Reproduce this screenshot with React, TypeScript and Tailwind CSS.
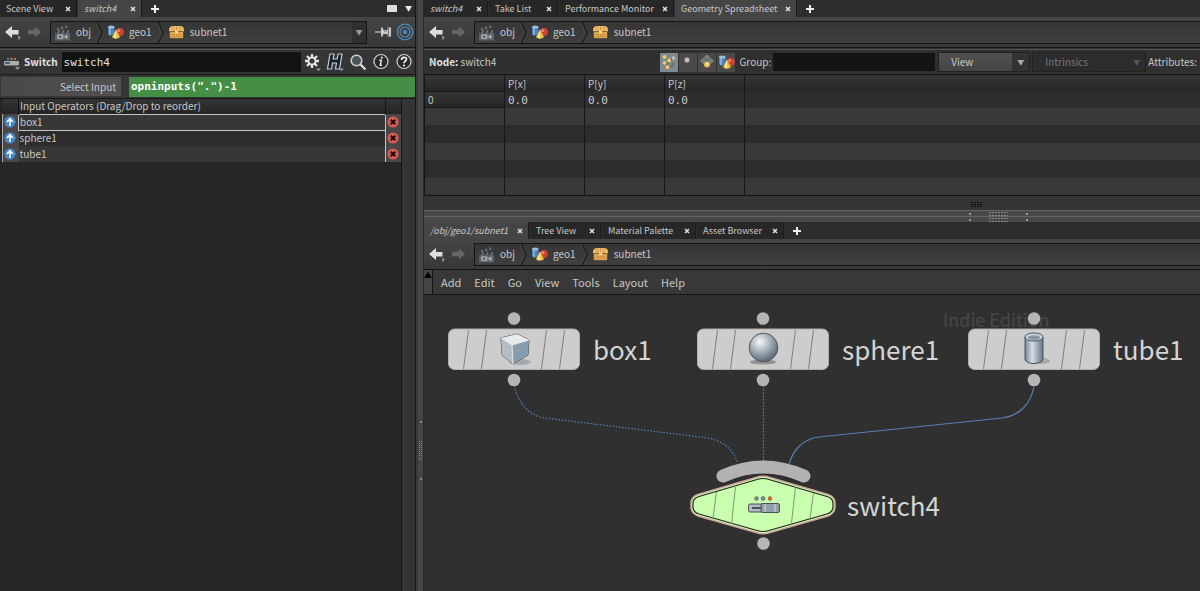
import type { ReactNode } from "react"

type Tab = { label: string; width: string; active?: boolean; italic?: boolean }

const leftTabs: Tab[] = [
  { label: "Scene View", width: "w-[77px]" },
  { label: "switch4", width: "w-[64px]", active: true, italic: true },
]

const sheetTabs: Tab[] = [
  { label: "switch4", width: "w-[64px]", italic: true },
  { label: "Take List", width: "w-[69px]" },
  { label: "Performance Monitor", width: "w-[115px]" },
  { label: "Geometry Spreadsheet", width: "w-[122px]", active: true },
]

const networkTabs: Tab[] = [
  { label: "/obj/geo1/subnet1", width: "w-[105px]", active: true, italic: true },
  { label: "Tree View", width: "w-[71px]" },
  { label: "Material Palette", width: "w-[94px]" },
  { label: "Asset Browser", width: "w-[87px]" },
]

const operators = ["box1", "sphere1", "tube1"]
const menus = ["Add", "Edit", "Go", "View", "Tools", "Layout", "Help"]

function TabBar({ tabs, children }: { tabs: Tab[]; children?: ReactNode }) {
  return (
    <div className="flex h-[17px] shrink-0 items-stretch gap-px bg-[#2d2d2d]">
      {tabs.map((tab) => (
        <div
          key={tab.label}
          className={`flex shrink-0 items-center justify-between border-r border-[#1c1c1c] pr-1 pl-[6px] text-[9px] leading-4 whitespace-nowrap ${tab.width} ${
            tab.active ? "bg-[#454545]" : "bg-[#272727]"
          }`}
        >
          <button type="button" className={tab.italic ? "italic" : ""}>
            {tab.label}
          </button>
          <button type="button" aria-label={`Close ${tab.label}`}>
            <svg viewBox="0 0 8 8" className="h-2 w-2" stroke="#e2e2e2" strokeWidth="1.5">
              <path d="M2 2l4 4M6 2l-4 4" />
            </svg>
          </button>
        </div>
      ))}
      <button type="button" aria-label="New tab" className="flex w-6 items-center justify-center">
        <svg viewBox="0 0 10 10" className="h-[10px] w-[10px]" stroke="#eee" strokeWidth="2">
          <path d="M5 1v8M1 5h8" />
        </svg>
      </button>
      {children}
    </div>
  )
}

function ClapperIcon() {
  return (
    <svg viewBox="0 0 17 17" className="h-[17px] w-[17px]">
      <path d="M1 4.500L14 .5l1.500 3L2 8z" fill="#3a3d3f" />
      <path d="M3.500 4l1.500 2.500M7.500 2.800l1.500 2.500M11.500 1.500l1.500 2.500" stroke="#85898b" strokeWidth="1.200" />
      <rect x="1" y="6.500" width="15" height="10" fill="#5a6064" />
      <path d="M1 6.500h15v2.300H1z" fill="#36393b" />
      <path d="M4 8.800l1.500-2.300M8.500 8.800L10 6.500M13 8.800l1.500-2.300" stroke="#85898b" strokeWidth="1.200" />
      <rect x="3" y="10.300" width="6.500" height="5" rx="1" fill="#9da2a5" />
      <path d="M9.500 12.800L13.500 10.300v5z" fill="#a9aeb1" />
      <circle cx="6" cy="12.800" r="1.200" fill="#5a6064" />
    </svg>
  )
}

function GeoIcon() {
  return (
    <svg viewBox="0 0 17 16" className="h-4 w-[17px]">
      <path d="M1 3v7c0 1.500 6 2 6.500.5V3z" fill="#4a82bd" />
      <path d="M3 3v8.300" stroke="#9fc2e4" strokeWidth="1.300" />
      <ellipse cx="4.200" cy="3" rx="3.300" ry="1.600" fill="#9dbcdb" />
      <circle cx="12.800" cy="8" r="4" fill="#cf4238" />
      <circle cx="11.700" cy="6.600" r="1.500" fill="#ee877b" />
      <path d="M9 5.500L5 13c1 2.300 6.500 2.300 8 0z" fill="#e6bd43" />
      <path d="M9 5.500L6.500 13c.8 1 2 1.300 2.800 1.300z" fill="#fbe78c" />
    </svg>
  )
}

function SubnetIcon() {
  return (
    <svg viewBox="0 0 17 14" className="h-[14px] w-[17px]">
      <path d="M1 5C1 2.500 2.500 1 5 1h7c2.500 0 4 1.500 4 4v1.500H1z" fill="#ecb968" />
      <path d="M1.800 6.500h13.400V12c0 .8-.4 1.200-1.200 1.200H3c-.8 0-1.200-.4-1.200-1.200z" fill="#e0a551" />
      <path d="M1 6.500h15" stroke="#9a6422" strokeWidth="1.100" />
      <path d="M5 1.500v4M8.500 1.200v4M12 1.500v4" stroke="#d2964a" strokeWidth=".9" />
      <path d="M3 9.700h11M3 11.700h11" stroke="#c68b3c" strokeWidth=".8" />
      <rect x="7" y="5.800" width="3" height="2.400" rx=".5" fill="#f7dc9d" />
    </svg>
  )
}

function Chevron() {
  return (
    <svg viewBox="0 0 7 21" className="h-full w-[7px]" fill="none" preserveAspectRatio="none">
      <path d="M1 0l5 10.500L1 21" stroke="#161616" strokeWidth="1.300" />
      <path d="M0 0l5 10.500L0 21" stroke="#565656" strokeWidth=".6" />
    </svg>
  )
}

function PathBar({ full = false }: { full?: boolean }) {
  return (
    <div className="flex h-[31px] shrink-0 items-center border-b border-[#141414] bg-[#3b3b3b] bg-linear-to-b from-[#454545] to-[#383838] pl-1">
      <button type="button" aria-label="Back" className="w-6">
        <svg viewBox="0 0 18 17" className="h-[17px] w-[18px]">
          <path d="M1 8l7-6v4h6.500v4.500H8V14z" fill="#dedede" />
          <path d="M14.500 11.500v4.500l2-2.200z" fill="#b5b5b5" />
        </svg>
      </button>
      <button type="button" aria-label="Forward" className="w-[22px]">
        <svg viewBox="0 0 14 14" className="h-[14px] w-[14px]">
          <path d="M13 7L7 1.500v3.300H0v4.400h7v3.300z" fill="#666" />
        </svg>
      </button>
      <div
        className={`flex h-[23px] min-w-0 flex-1 items-center border border-[#151515] bg-linear-to-b from-[#353535] to-[#404040] text-[10px] leading-5 ${
          full ? "border-r-0" : ""
        }`}
      >
        <a href="#obj" className="flex items-center gap-[5px] pr-[5px] pl-[3px]">
          <ClapperIcon />
          obj
        </a>
        <Chevron />
        <a href="#geo1" className="flex items-center gap-[5px] pr-[5px] pl-1">
          <GeoIcon />
          geo1
        </a>
        <Chevron />
        <a href="#subnet1" className="flex flex-1 items-center gap-[5px] pl-1">
          <SubnetIcon />
          subnet1
        </a>
        {!full && (
          <button
            type="button"
            aria-label="Path history"
            className="flex h-full w-[14px] items-center justify-center bg-[#303030] text-[7px] text-[#999]"
          >
            ▼
          </button>
        )}
      </div>
      {!full && (
        <div className="flex items-center gap-1 pr-px pl-2">
          <button type="button" aria-label="Pin">
            <svg viewBox="0 0 17 14" className="h-[14px] w-[17px]">
              <path d="M0 7h7" stroke="#ccc" strokeWidth="1.200" />
              <path d="M6 2.500h1.500l1 2.500h4V2.500H16v9h-3.500V9h-4l-1 2.500H6z" fill="#c9c9c9" />
              <path d="M13.500 3v8M9 6h3" stroke="#666" strokeWidth=".9" />
            </svg>
          </button>
          <button type="button" aria-label="Follow selection">
            <svg viewBox="0 0 18 18" className="h-[18px] w-[18px]" fill="none">
              <circle cx="9" cy="9" r="7.800" stroke="#5089ba" strokeWidth="1.200" />
              <circle cx="9" cy="9" r="5" stroke="#5c8ab2" strokeWidth="1.200" />
              <circle cx="9" cy="9" r="2.300" fill="#4584bd" />
            </svg>
          </button>
        </div>
      )}
    </div>
  )
}

function ToolIcons() {
  return (
    <div className="flex items-center gap-[5px] pr-[2px] pl-[2px]">
      <button type="button" aria-label="Gear menu">
        <svg viewBox="0 0 18 18" className="h-[18px] w-[18px]">
          <g stroke="#e3e3e3" strokeWidth="2.300">
            <path d="M9 1v4M9 11v4M2 8h4M12 8h4M4 3l3 3M11 10l3 3M14 3l-3 3M7 10l-3 3" />
          </g>
          <circle cx="9" cy="8" r="3.600" fill="none" stroke="#e3e3e3" strokeWidth="2" />
          <path d="M13 15.500h5l-2.500 2.500z" fill="#999" />
        </svg>
      </button>
      <button type="button" aria-label="Houdini presets">
        <svg viewBox="0 0 18 18" className="h-[18px] w-[18px]">
          <path
            d="M4 1h4l-.8 5h4L12 1h4l-2.500 15h-4l1-6h-4l-1 6h-4z"
            fill="#16202b"
            stroke="#c4d0d9"
            strokeWidth="1.200"
          />
          <path d="M13 15.500h5l-2.500 2.500z" fill="#999" />
        </svg>
      </button>
      <button type="button" aria-label="Search parameters">
        <svg viewBox="0 0 18 18" className="h-[18px] w-[18px]">
          <circle cx="7.500" cy="7.500" r="5.300" fill="#4b5459" stroke="#d3d3d3" strokeWidth="1.500" />
          <path d="M11.500 11.500l5 5" stroke="#ddd" strokeWidth="2.300" />
        </svg>
      </button>
      <button type="button" aria-label="Information">
        <svg viewBox="0 0 18 18" className="h-[18px] w-[18px]">
          <circle cx="9" cy="8.500" r="7" fill="#292929" stroke="#d6d6d6" strokeWidth="1.200" />
          <path d="M7.300 7.300h2l-1 5h1.700" fill="none" stroke="#d5dde3" strokeWidth="1.600" />
          <circle cx="9.800" cy="4.700" r="1.100" fill="#d5dde3" />
        </svg>
      </button>
      <button type="button" aria-label="Help">
        <svg viewBox="0 0 18 18" className="h-[18px] w-[18px]">
          <circle cx="9" cy="8.500" r="7" fill="#292929" stroke="#d6d6d6" strokeWidth="1.200" />
          <path
            d="M6.500 7c0-3.500 5-3.300 5-.8C11.500 8 9 8 9 10.200"
            fill="none"
            stroke="#eee"
            strokeWidth="1.700"
          />
          <circle cx="9" cy="12.500" r="1.100" fill="#eee" />
        </svg>
      </button>
    </div>
  )
}

function ParameterPane() {
  return (
    <section className="flex min-w-0 flex-col border-r border-[#161616] bg-[#353535]">
      <TabBar tabs={leftTabs}>
        <div className="ml-auto flex items-center gap-2 pr-[3px]">
          <button type="button" aria-label="Maximize pane" className="h-[7px] w-[10px] bg-[#ddd]" />
          <button type="button" aria-label="Pane menu" className="text-[7px] text-[#eee]">
            ▼
          </button>
        </div>
      </TabBar>
      <PathBar />
      <div className="mt-px flex h-[26px] shrink-0 items-center border-t border-b border-t-[#555] border-b-[#1a1a1a]">
        <button type="button" aria-label="Switch node menu" className="ml-[3px]">
          <svg viewBox="0 0 17 16" className="h-4 w-[17px]">
            <rect x="1" y="7" width="15" height="4.500" rx="1" fill="#a8adb0" />
            <rect x="2" y="8" width="5" height="2" fill="#555b60" />
            <circle cx="5" cy="5" r="1.200" fill="#777" />
            <circle cx="8.500" cy="5" r="1.200" fill="#888" />
            <circle cx="12" cy="5" r="1.200" fill="#c06a3a" />
            <path d="M12 13h5l-2.500 3z" fill="#999" />
          </svg>
        </button>
        <label htmlFor="node-name" className="pl-1 text-[10px] leading-5 font-bold text-[#e0e0e0]">
          Switch
        </label>
        <input
          id="node-name"
          defaultValue="switch4"
          className="ml-1 h-5 min-w-0 flex-1 bg-[#131313] px-[2px] font-['DejaVu_Sans_Mono',monospace] text-[11px] text-[#e0e0e0] outline-none"
        />
        <ToolIcons />
      </div>
      <div className="flex h-6 shrink-0 items-center gap-2 border-b border-[#161616] pl-px">
        <label
          htmlFor="select-input"
          className="h-[19px] w-[120px] bg-linear-to-r from-[#494949] to-[#515151] pr-[5px] text-right text-[10px] leading-[19px]"
        >
          Select Input
        </label>
        <input
          id="select-input"
          defaultValue={'opninputs(".")-1'}
          className="h-5 min-w-0 flex-1 bg-[#448f45] px-[2px] font-['DejaVu_Sans_Mono',monospace] text-[11px] font-bold text-white outline-none"
        />
      </div>
      <div className="flex flex-1">
        <div className="min-w-0 flex-1 border-r border-[#171717] bg-[#262626] pl-[2px]">
          <table className="w-full table-fixed border-collapse text-[10px] leading-[14px]">
            <colgroup>
              <col className="w-4" />
              <col />
              <col className="w-4" />
            </colgroup>
            <thead>
              <tr className="h-[15px] bg-linear-to-b from-[#333] to-[#252525]">
                <th className="border-r border-[#151515] p-0" />
                <th className="border-r border-[#151515] p-0 pl-px text-left font-normal">
                  Input Operators (Drag/Drop to reorder)
                </th>
                <th className="p-0" />
              </tr>
            </thead>
            <tbody>
              {operators.map((name, i) => (
                <tr key={name} className="h-4 odd:bg-[#373737] even:bg-[#2c2c2c]">
                  <td className="border-l border-[#aaa] bg-[#484848] p-0">
                    <button type="button" aria-label={`Jump to ${name}`} className="block">
                      <svg viewBox="0 0 14 14" className="h-[14px] w-[14px]">
                        <circle cx="7" cy="7" r="5.700" fill="#4685c5" />
                        <path d="M7 11V4M4 7l3-3.300L10 7" fill="none" stroke="#fff" strokeWidth="1.500" />
                      </svg>
                    </button>
                  </td>
                  <td className={`p-0 pl-px ${i === 0 ? "border border-[#c4c4c4]" : ""}`}>{name}</td>
                  <td className="border-l border-[#c4c4c4] bg-[#484848] p-0">
                    <button type="button" aria-label={`Remove ${name}`} className="block">
                      <svg viewBox="0 0 14 14" className="h-[14px] w-[14px]">
                        <circle cx="7" cy="7" r="5.500" fill="#e05a50" />
                        <path d="M4.800 4.800l4.400 4.400M9.200 4.800L4.800 9.200" stroke="#16090a" strokeWidth="2" />
                      </svg>
                    </button>
                  </td>
                </tr>
              ))}
            </tbody>
          </table>
        </div>
        <div className="w-[13px] bg-[#343434]" />
      </div>
    </section>
  )
}

function DropDown({ id, label, disabled = false }: { id: string; label: string; disabled?: boolean }) {
  return (
    <div
      className={`relative flex h-5 border border-[#222] ${
        disabled ? "w-[114px] bg-[#2c2c2c] text-[#777]" : "w-[92px] bg-linear-to-b from-[#505050] to-[#444]"
      }`}
    >
      <select
        id={id}
        aria-label={label}
        disabled={disabled}
        className="w-full appearance-none bg-transparent pl-3 text-[10px] leading-[18px] outline-none"
      >
        <option>{label}</option>
      </select>
      <span
        className={`pointer-events-none absolute inset-y-0 right-0 flex w-[17px] items-center justify-center text-[7px] ${
          disabled ? "text-[#555]" : "bg-[#333] text-[#aaa]"
        }`}
      >
        ▼
      </span>
    </div>
  )
}

function ComponentButtons() {
  const base = "flex h-[19px] w-[18px] items-center justify-center"
  return (
    <div className="flex gap-px">
      <button type="button" aria-label="Points" className={`${base} bg-[#7d8a93]`}>
        <svg viewBox="0 0 16 16" className="h-4 w-4">
          <path d="M3 3l5 4-3 6M8 7l5-3M5 13l7-1" stroke="#4e5254" fill="none" />
          <g fill="#f5ca5a">
            <circle cx="3.500" cy="3" r="2" />
            <circle cx="8" cy="6.500" r="2" />
            <circle cx="3.500" cy="9" r="1.800" />
            <circle cx="6.500" cy="13" r="2" />
          </g>
          <circle cx="12.500" cy="4" r="1.700" fill="#c9c5ad" />
          <circle cx="12" cy="10" r="1.700" fill="#6b7378" />
        </svg>
      </button>
      <button type="button" aria-label="Vertices" className={`${base} bg-[#4a4a4a]`}>
        <svg viewBox="0 0 16 16" className="h-4 w-4">
          <circle cx="7" cy="6" r="3.200" fill="#6f6868" />
          <circle cx="7" cy="6" r="2.200" fill="#d9bcbc" />
        </svg>
      </button>
      <button type="button" aria-label="Primitives" className={`${base} bg-[#4a4a4a]`}>
        <svg viewBox="0 0 16 16" className="h-4 w-4">
          <path d="M8 1l6.500 6L8 13 1.500 7z" fill="#777b7d" stroke="#9a9a9a" strokeWidth=".6" />
          <path d="M5 4l6.500 6M11 4L4.500 10" stroke="#55595b" strokeWidth=".7" />
          <circle cx="8" cy="10.500" r="3" fill="#e9b945" />
          <circle cx="8" cy="10" r="1.400" fill="#fbeeb0" />
        </svg>
      </button>
      <button type="button" aria-label="Detail" className={`${base} bg-[#4a4a4a]`}>
        <GeoIcon />
      </button>
    </div>
  )
}

function Spreadsheet() {
  const cell = "border-r border-[#171717] p-0 pl-[3px]"
  return (
    <section className="flex shrink-0 flex-col">
      <TabBar tabs={sheetTabs} />
      <PathBar full />
      <div className="mt-px flex h-[26px] shrink-0 items-center border-t border-b border-t-[#555] border-b-[#141414] bg-[#303030] pl-[5px] text-[10px] leading-5">
        <div className="flex-1 whitespace-nowrap">
          <b className="text-[#e0e0e0]">Node:</b> switch4
        </div>
        <ComponentButtons />
        <label htmlFor="group" className="pl-1">
          Group:
        </label>
        <input id="group" className="mr-[3px] ml-[2px] h-[18px] w-[162px] bg-[#141414] outline-none" />
        <DropDown id="view" label="View" />
        <div className="w-[2px]" />
        <DropDown id="intrinsics" label="Intrinsics" disabled />
        <span className="pr-[3px] pl-[2px]">Attributes:</span>
      </div>
      <div className="border-b border-l border-[#141414] pt-px">
        <table className="w-full table-fixed border-separate border-spacing-0 text-[10px] leading-[14px]">
          <colgroup>
            <col className="w-20" />
            <col className="w-20" />
            <col className="w-20" />
            <col className="w-20" />
            <col />
          </colgroup>
          <thead>
            <tr className="h-[15px] bg-linear-to-b from-[#363636] to-[#262626] text-left">
              <th className={cell} />
              {["P[x]", "P[y]", "P[z]"].map((name) => (
                <th key={name} className={`${cell} font-normal`}>
                  {name}
                </th>
              ))}
              <th className="p-0" />
            </tr>
          </thead>
          <tbody>
            <tr className="h-[17px] bg-[#2d2d2d]">
              <td className={`${cell} border-y bg-linear-to-b from-[#363636] to-[#262626]`}>0</td>
              {["x", "y", "z"].map((axis) => (
                <td key={axis} className={`${cell} pt-[2px] align-middle font-['DejaVu_Sans_Mono',monospace] text-[11px]`}>
                  0.0
                </td>
              ))}
              <td className="p-0" />
            </tr>
            {[1, 2, 3, 4, 5].map((row) => (
              <tr key={row} className="h-[17px] odd:h-[18px] odd:bg-[#2c2c2c] even:bg-[#393939]">
                <td className={cell} />
                <td className={cell} />
                <td className={cell} />
                <td className={cell} />
                <td className="p-0" />
              </tr>
            ))}
          </tbody>
        </table>
      </div>
      <div className="flex h-[14px] items-center bg-[#353535] pt-[2px] pl-[70%]">
        <div className="ml-1 grid grid-cols-4 gap-px">
          {Array.from({ length: 12 }, (_, i) => (
            <i key={i} className="h-px w-[2px] bg-[#0d0d0d] pt-px" />
          ))}
        </div>
      </div>
    </section>
  )
}

function SplitterRow() {
  return (
    <div className="flex h-[6px] items-center gap-[18px] border-t border-[#666] bg-[#484848] pl-[70%]">
      <i className="ml-[2px] h-[2px] w-[2px] bg-[#999]" />
      <svg viewBox="0 0 19 4" className="h-1 w-[19px]" stroke="#8a8a8a" strokeWidth="1" strokeDasharray="2 1">
        <path d="M0 .5h19M0 3.500h19" />
      </svg>
      <i className="h-[2px] w-[2px] bg-[#999]" />
    </div>
  )
}

function BoxShape() {
  return (
    <g>
      <ellipse cx="72" cy="50" rx="11" ry="3" fill="#999" opacity=".7" />
      <path d="M53 26l16-4 12 6-1 15-15 9-11-9z" fill="#8fa3b3" stroke="#4b4b4b" strokeLinejoin="round" />
      <path d="M53 26l16-4 12 6-17 5z" fill="#e9ebec" />
      <path d="M53 26l11 7 1 19-11-9z" fill="#b2bdc6" />
      <path d="M64 33l17-5-1 15-15 9z" fill="#879dad" />
      <path d="M53 26l11 7 17-5M64 33l1 19" stroke="#f1f1f1" fill="none" strokeWidth=".9" />
    </g>
  )
}

function SphereShape() {
  return (
    <g>
      <defs>
        <radialGradient id="ball" cx=".38" cy=".3" r=".7">
          <stop offset="0" stopColor="#f7f7f7" />
          <stop offset=".45" stopColor="#aeb8c0" />
          <stop offset="1" stopColor="#5b6a77" />
        </radialGradient>
      </defs>
      <ellipse cx="66" cy="50" rx="13" ry="2.500" fill="#777" opacity=".7" />
      <circle cx="66.500" cy="35.500" r="14.300" fill="url(#ball)" stroke="#4b5761" />
    </g>
  )
}

function TubeShape() {
  return (
    <g>
      <defs>
        <linearGradient id="barrel">
          <stop offset="0" stopColor="#738697" />
          <stop offset=".4" stopColor="#d7dde1" />
          <stop offset="1" stopColor="#647584" />
        </linearGradient>
      </defs>
      <ellipse cx="74" cy="49" rx="8" ry="3" fill="#999" opacity=".7" />
      <path d="M57 25v22c0 6 18 6 18 0V25z" fill="url(#barrel)" stroke="#48545e" />
      <ellipse cx="66" cy="25" rx="9" ry="4" fill="#cfd6db" stroke="#48545e" />
      <ellipse cx="66" cy="25.500" rx="6" ry="2.300" fill="#8397a6" />
    </g>
  )
}

function GraphNode({ name, place, children }: { name: string; place: string; children: ReactNode }) {
  return (
    <div className={`absolute flex items-center gap-[13px] ${place}`}>
      <svg viewBox="0 0 132 74" className="h-[74px] w-[132px]">
        <circle cx="66" cy="6.500" r="6.300" fill="#b5b5b5" />
        <circle cx="66" cy="68" r="6.300" fill="#b5b5b5" />
        <rect x=".5" y="17" width="131" height="40.500" rx="6" fill="#cdcdcd" stroke="#b4aead" />
        <path
          d="M20.500 18l-5 39M38.500 18l-5 39M98.500 18l-5 39M116.500 18l-5 39"
          stroke="#808080"
          strokeWidth="1"
        />
        {children}
      </svg>
      <span className="text-[26px] leading-8 text-[#d4d4d4]">{name}</span>
    </div>
  )
}

function SwitchNode() {
  return (
    <div className="absolute top-[164px] left-[266px] flex items-center gap-[11px]">
      <svg viewBox="0 0 146 92" className="h-[92px] w-[146px]">
        <path d="M33 17Q73 -1 114 17" fill="none" stroke="#b3b1b1" strokeWidth="13" strokeLinecap="round" />
        <path
          d="M66 18.500Q73 16 80 18.500L138 35.500Q145 38 145 44V48Q145 54 138 57L80 73.500Q73 76 66 73.500L8 57Q1 54 1 48V44Q1 38 8 35.500z"
          fill="#c9ffae"
          stroke="#d1a79c"
          strokeWidth="1.500"
        />
        <path
          d="M67 20.500Q73 18.500 79 20.500L137 37.500Q143 39.500 143 44V48Q143 53 137 55L79 71.500Q73 73.500 67 71.500L9 55Q3 53 3 48V44Q3 39.500 9 37.500z"
          fill="none"
          stroke="#20231f"
          strokeWidth="1.200"
        />
        <path
          d="M26.500 33L23 59M45.500 28L41.500 65M105.500 28L101.500 64M123.500 34L120 59"
          stroke="#7f9a72"
          strokeWidth="1"
        />
        <g stroke="#49525a">
          <circle cx="66.500" cy="39.500" r="1.700" fill="#9aa4ad" />
          <circle cx="73" cy="39.500" r="1.700" fill="#9aa4ad" />
          <circle cx="80" cy="39.500" r="1.700" fill="#e87732" stroke="#a84d1c" />
          <rect x="58.500" y="45" width="30" height="8" rx="1.500" fill="#b1bac1" />
          <path d="M62 49h9" strokeWidth="2" />
          <rect x="71" y="44.500" width="18.500" height="9" rx="1.500" fill="#92a0ab" />
          <path d="M75 45v8M85 45v8" stroke="#d3dbe0" />
        </g>
        <circle cx="73.500" cy="84.500" r="6.300" fill="#b5b5b5" />
      </svg>
      <span className="text-[26px] leading-8 text-[#d4d4d4]">switch4</span>
    </div>
  )
}

function Network() {
  return (
    <section className="flex flex-1 flex-col">
      <TabBar tabs={networkTabs} />
      <PathBar full />
      <div className="flex h-[25px] shrink-0 items-stretch border-b border-[#171717] bg-[#383838]">
        <button
          type="button"
          aria-label="Collapse menu"
          className="flex w-[9px] justify-center border-r border-[#161616] bg-[#444] text-[8px] leading-[10px] text-black"
        >
          ▲
        </button>
        <nav className="flex items-center gap-[13px] pl-2 text-[11px] leading-5">
          {menus.map((menu) => (
            <button key={menu} type="button">
              {menu}
            </button>
          ))}
        </nav>
      </div>
      <div className="relative min-h-[290px] flex-1 overflow-hidden bg-[#303030]">
        <span className="absolute top-[12px] left-[519px] text-lg leading-6 whitespace-nowrap text-[#484848]">
          Indie Edition
        </span>
        <svg className="absolute inset-0 h-full w-full" fill="none" stroke="#5681b8" strokeWidth="1.200">
          <path d="M90.500 91C94 109 106 121 121 123L284 143C300 146 309 155 314 168" strokeDasharray="1.500 1.700" />
          <path d="M339.500 91V166" strokeDasharray="1.500 1.700" />
          <path d="M610 91C607 109 595 121 578 123L395 142C379 144 369 155 365 169" />
        </svg>
        <GraphNode name="box1" place="top-[17px] left-[24px]">
          <BoxShape />
        </GraphNode>
        <GraphNode name="sphere1" place="top-[17px] left-[273px]">
          <SphereShape />
        </GraphNode>
        <GraphNode name="tube1" place="top-[17px] left-[544px]">
          <TubeShape />
        </GraphNode>
        <SwitchNode />
      </div>
    </section>
  )
}

export default function App() {
  return (
    <main className="grid min-h-screen grid-cols-[minmax(0,416fr)_8px_minmax(0,776fr)] overflow-hidden bg-[#303030] font-['Noto_Sans_CJK_SC',sans-serif] text-[#c8c8c8]">
      <ParameterPane />
      <div className="flex flex-col items-center justify-center gap-[18px] border-r border-l-2 border-r-[#2a2a2a] border-l-[#3a3a3a] bg-[#454545] pt-[310px]">
        <i className="h-[2px] w-[2px] bg-[#888]" />
        <i className="h-[19px] w-[3px] border-x border-dotted border-[#888]" />
        <i className="h-[2px] w-[2px] bg-[#888]" />
      </div>
      <div className="flex min-w-0 flex-col">
        <Spreadsheet />
        <SplitterRow />
        <SplitterRow />
        <Network />
      </div>
    </main>
  )
}
